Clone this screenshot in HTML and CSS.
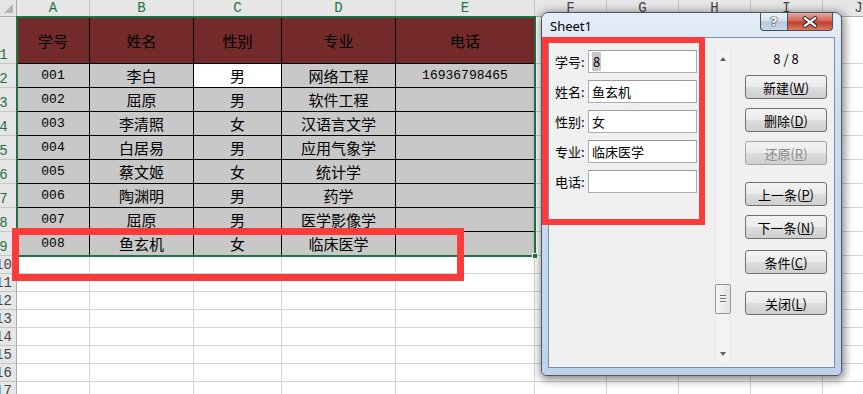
FILE: index.html
```html
<!DOCTYPE html>
<html lang="zh">
	<head>
		<meta charset="utf-8">
		<title>Sheet1 - 记录单</title>
		<link rel="stylesheet" href="styles.css">
	</head>
	<body>
		<div class="page">
			<div class="sheet" id="sheet"></div>
			<div class="selection"></div>
			<div class="mark mark-row"></div>

			<div class="dialog">
				<div class="titlebar">
					<span class="title">Sheet1</span>
					<div class="caption">
						<span class="cap-help">?</span>
						<span class="cap-close">
							<svg width="46" height="18" viewBox="0 0 46 18">
								<path d="M17.5 5 L28.5 13 M28.5 5 L17.5 13" stroke="#3a2a28" stroke-width="4.4" stroke-linecap="round"/>
								<path d="M17.5 5 L28.5 13 M28.5 5 L17.5 13" stroke="#fff" stroke-width="2.2" stroke-linecap="round"/>
							</svg>
						</span>
					</div>
				</div>
				<div class="client">
					<div class="fields">
						<div class="field"><label>学号:</label><div class="input"><span class="sel">8</span></div></div>
						<div class="field"><label>姓名:</label><div class="input">鱼玄机</div></div>
						<div class="field"><label>性别:</label><div class="input">女</div></div>
						<div class="field"><label>专业:</label><div class="input">临床医学</div></div>
						<div class="field"><label>电话:</label><div class="input"></div></div>
					</div>
					<div class="scroll">
						<div class="arrow up"></div>
						<div class="track">
							<div class="thumb"><i></i><i></i><i></i></div>
						</div>
						<div class="arrow down"></div>
					</div>
					<div class="actions">
						<div class="count">8 / 8</div>
						<button>新建(<u>W</u>)</button>
						<button>删除(<u>D</u>)</button>
						<button class="disabled">还原(<u>R</u>)</button>
						<button class="gap">上一条(<u>P</u>)</button>
						<button>下一条(<u>N</u>)</button>
						<button class="gap-s">条件(<u>C</u>)</button>
						<button class="gap">关闭(<u>L</u>)</button>
					</div>
				</div>
			</div>

			<div class="mark mark-form"></div>
		</div>

		<script type="text/javascript">
			var cols = ['A', 'B', 'C', 'D', 'E', 'F', 'G', 'H', 'I', 'J'];
			var header = ['学号', '姓名', '性别', '专业', '电话'];
			var rows = [
				['001', '李白', '男', '网络工程', '16936798465'],
				['002', '屈原', '男', '软件工程', ''],
				['003', '李清照', '女', '汉语言文学', ''],
				['004', '白居易', '男', '应用气象学', ''],
				['005', '蔡文姬', '女', '统计学', ''],
				['006', '陶渊明', '男', '药学', ''],
				['007', '屈原', '男', '医学影像学', ''],
				['008', '鱼玄机', '女', '临床医学', '']
			];
			var sheet = document.getElementById('sheet');

			function add(cls, text) {
				var d = document.createElement('div');
				d.className = 'cell ' + cls;
				if (text) d.textContent = text;
				sheet.appendChild(d);
			}

			add('corner');
			cols.forEach(function (c, i) {
				add(i < 5 ? 'colhead on' : 'colhead', c);
			});

			for (var r = 1; r <= 17; r++) {
				add(r <= 9 ? 'rowhead on' : 'rowhead', String(r));
				for (var c = 0; c < 10; c++) {
					if (r === 1 && c < 5) {
						add('head', header[c]);
					} else if (r <= 9 && c < 5) {
						var cls = 'data';
						if (c === 0 || c === 4) cls += ' num';
						if (r === 2 && c === 2) cls += ' active';
						add(cls, rows[r - 2][c]);
					} else {
						add('blank');
					}
				}
			}
		</script>
	</body>
</html>
```

FILE: styles.css
```css
body {
	margin: 0;
	overflow: hidden;
	background: #fff;
	font-family: 'Noto Sans CJK SC', 'Noto Sans', sans-serif;
}
.page {
	position: relative;
	width: 863px;
	height: 394px;
	overflow: hidden;
}

/* sheet grid */
.sheet {
	display: grid;
	grid-template-columns: 26px 73px 104px 88px 114px 139px repeat(5, 72px);
	grid-template-rows: 17px 47px repeat(8, 24px) repeat(8, 18px);
	margin-left: -9px;
	font-size: 15px;
	color: #000;
}
.cell {
	box-sizing: border-box;
	border-right: 1px solid #d4d4d4;
	border-bottom: 1px solid #d4d4d4;
	display: flex;
	align-items: center;
	justify-content: center;
	overflow: hidden;
	white-space: nowrap;
}
.corner {
	position: relative;
	background: #e6e6e6;
	border-right-color: #ababab;
	border-bottom-color: #ababab;
}
.corner::after {
	content: '';
	position: absolute;
	right: 3px;
	bottom: 3px;
	border-style: solid;
	border-width: 0 0 9px 9px;
	border-color: transparent transparent #b4b4b4 transparent;
}
.colhead, .rowhead {
	background: #e6e6e6;
	font-family: 'Liberation Mono', monospace;
	font-size: 14px;
	color: #444;
	border-right-color: #c6c6c6;
	border-bottom-color: #ababab;
}
.rowhead {
	align-items: flex-end;
	border-right-color: #ababab;
	border-bottom-color: #c6c6c6;
	line-height: 14px;
	padding-bottom: 1px;
}
.colhead.on, .rowhead.on {
	color: #217346;
}
.head {
	background: #722a2a;
	border-color: #000;
}
.data {
	background: #c8c8c8;
	border-color: #000;
}
.data.active {
	background: #fff;
}
.num {
	font-family: 'Liberation Mono', monospace;
	font-size: 13px;
}

/* selected range A1:E9, drawn over the grid */
.selection {
	position: absolute;
	left: 16px;
	top: 16px;
	width: 520px;
	height: 241px;
	box-sizing: border-box;
	border: 2px solid #217346;
	z-index: 1;
	pointer-events: none;
}
.selection::after {
	content: '';
	position: absolute;
	right: -4px;
	bottom: -4px;
	width: 4px;
	height: 4px;
	background: #217346;
	border: 1px solid #fff;
}

/* red annotations */
.mark {
	position: absolute;
	box-sizing: border-box;
	border: 7px solid #fd3b3b;
	z-index: 5;
}
.mark-row {
	left: 12px;
	top: 228px;
	width: 452px;
	height: 53px;
}
.mark-form {
	left: 542px;
	top: 37px;
	width: 163px;
	height: 188px;
	border-width: 6px;
}

/* record form dialog */
.dialog {
	position: absolute;
	left: 541px;
	top: 12px;
	z-index: 3;
	box-sizing: border-box;
	width: 301px;
	height: 364px;
	padding: 0 6px 7px;
	border: 1px solid #4d5766;
	border-radius: 7px 7px 5px 5px;
	background: linear-gradient(#e4edf7, #cbdcef 30%, #bfd4ec);
	box-shadow: 1px 2px 9px 2px rgba(0, 0, 0, 0.45);
}
.titlebar {
	display: flex;
	justify-content: space-between;
	height: 24px;
}
.title {
	font-family: 'Noto Sans', sans-serif;
	font-size: 13px;
	line-height: 26px;
	padding-left: 2px;
	color: #000;
}
.caption {
	display: flex;
	margin-right: 2px;
	height: 18px;
}
.caption span {
	box-sizing: border-box;
	height: 18px;
	border: 1px solid #46505e;
	border-top: none;
	display: flex;
	align-items: center;
	justify-content: center;
}
.cap-help {
	width: 27px;
	border-right: none !important;
	border-radius: 0 0 0 4px;
	background: linear-gradient(#eef2f7, #d5dfeb 45%, #b8c8dc 55%, #c9d7e8);
	color: #fff;
	font-family: 'DejaVu Sans', sans-serif;
	font-weight: bold;
	font-size: 13px;
	text-shadow: 0 0 1px #2b3a4c, 0 0 1px #2b3a4c, 0 0 1px #2b3a4c, 0 0 1px #2b3a4c;
}
.cap-close {
	width: 46px;
	border-radius: 0 0 4px 0;
	background: linear-gradient(#e9a99d, #d0665a 45%, #c2402f 55%, #d77a63);
}
.client {
	display: flex;
	box-sizing: border-box;
	height: 331px;
	border: 1px solid #7c8fa8;
	background: #f0f0f0;
	font-size: 13px;
}
.fields {
	padding: 12px 0 0 6px;
}
.field {
	display: flex;
	align-items: center;
	height: 23px;
	margin-bottom: 7px;
}
.field label {
	width: 33px;
	color: #000;
}
.input {
	box-sizing: border-box;
	width: 109px;
	height: 23px;
	line-height: 21px;
	padding-left: 3px;
	background: #fff;
	border: 1px solid #abadb3;
	border-top-color: #9a9ca3;
	color: #000;
}
.sel {
	background: #c8c8c8;
	padding: 0 1px;
}
.scroll {
	display: flex;
	flex-direction: column;
	box-sizing: border-box;
	width: 16px;
	height: 312px;
	margin: 12px 0 0 18px;
	background: #f3f3f3;
	border-left: 1px solid #e6e6e6;
	border-right: 1px solid #e6e6e6;
}
.arrow {
	height: 17px;
	display: flex;
	align-items: center;
	justify-content: center;
}
.arrow::before {
	content: '';
	border-style: solid;
	border-color: transparent;
}
.arrow.up::before {
	border-width: 0 3.5px 4px;
	border-bottom-color: #5f5f5f;
}
.arrow.down::before {
	border-width: 4px 3.5px 0;
	border-top-color: #5f5f5f;
}
.track {
	flex: 1;
}
.thumb {
	box-sizing: border-box;
	height: 30px;
	margin: 217px -1px 0 -1px;
	border: 1px solid #979797;
	border-radius: 2px;
	background: linear-gradient(to right, #f6f6f6, #e4e4e4);
	display: flex;
	flex-direction: column;
	align-items: center;
	justify-content: center;
	gap: 1px;
}
.thumb i {
	display: block;
	width: 6px;
	height: 1px;
	background: #6f6f6f;
	border-bottom: 1px solid #fbfbfb;
}
.actions {
	display: flex;
	flex-direction: column;
	width: 82px;
	margin-left: 14px;
	padding-top: 12px;
}
.count {
	height: 25px;
	line-height: 18px;
	text-align: center;
	color: #000;
}
.actions button {
	box-sizing: border-box;
	height: 24px;
	margin: 0 0 9px;
	padding: 0;
	border: 1px solid #707070;
	border-radius: 3px;
	background: linear-gradient(#f2f2f2, #ebebeb 50%, #dddddd 50%, #cfcfcf);
	font-family: 'Noto Sans CJK SC', 'Noto Sans', sans-serif;
	font-size: 13px;
	color: #000;
}
.actions button u {
	text-underline-offset: 1px;
}
.actions button.disabled {
	color: #8a8a8a;
	border-color: #a4a4a4;
}
.actions button.gap {
	margin-top: 8px;
}
.actions button.gap-s {
	margin-top: 2px;
}
```
